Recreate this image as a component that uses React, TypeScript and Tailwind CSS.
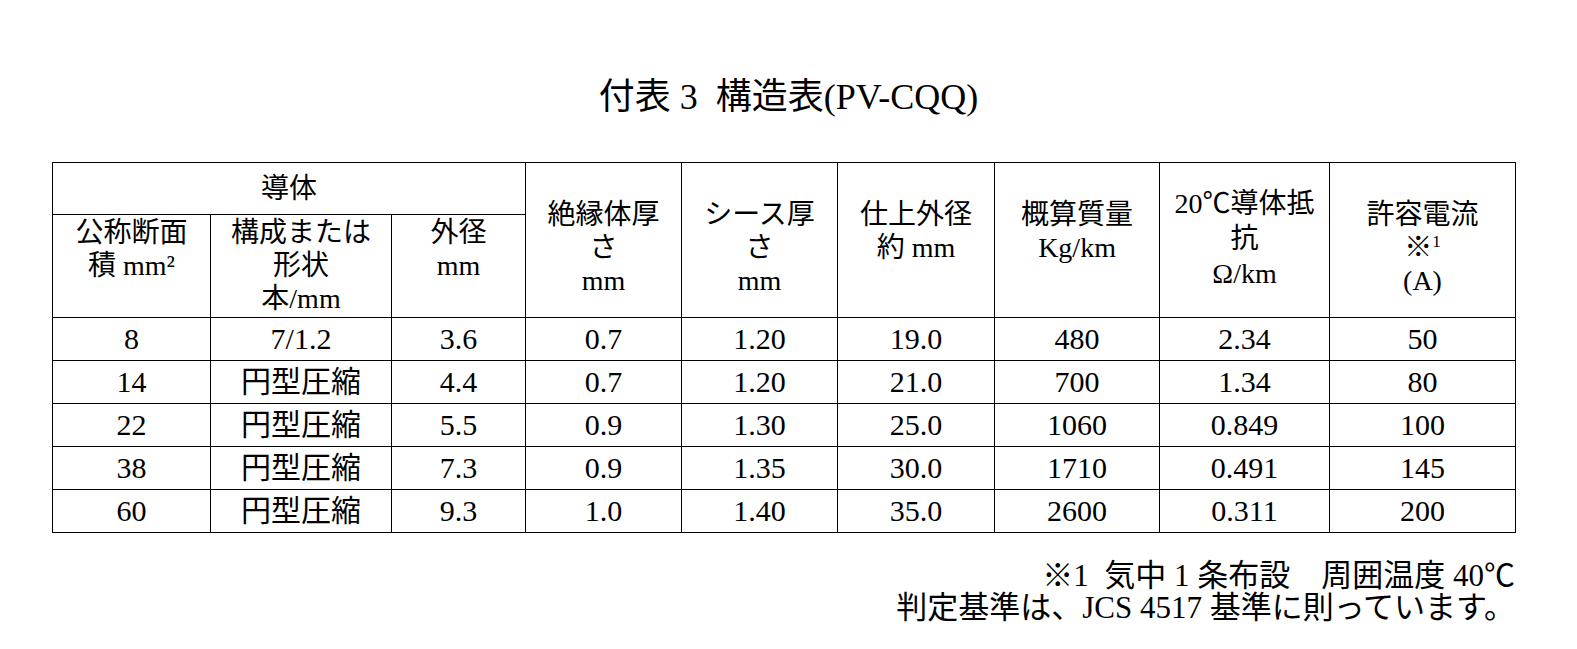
const rows = [
  ['8', '7/1.2', '3.6', '0.7', '1.20', '19.0', '480', '2.34', '50'],
  ['14', '円型圧縮', '4.4', '0.7', '1.20', '21.0', '700', '1.34', '80'],
  ['22', '円型圧縮', '5.5', '0.9', '1.30', '25.0', '1060', '0.849', '100'],
  ['38', '円型圧縮', '7.3', '0.9', '1.35', '30.0', '1710', '0.491', '145'],
  ['60', '円型圧縮', '9.3', '1.0', '1.40', '35.0', '2600', '0.311', '200'],
];

const colWidths = [158, 181, 134, 156, 156, 157, 165, 170, 186];

const cell = 'border border-black text-center p-0';
const tall = `${cell} align-top pt-[35px] leading-[33px]`;
const sub = `${cell} align-top pt-[1px] leading-[33px]`;

export default function App() {
  return (
    <div className="min-h-[649px] w-[1577px] bg-white text-black font-['Liberation_Serif','Noto_Sans_CJK_JP',serif]">
      <div className="pt-[77px] text-center text-[36px] leading-[40px]">
        付表 3&nbsp;&nbsp;構造表(PV-CQQ)
      </div>

      <div className="mt-[45px] pl-[52px]">
        <table className="w-[1464px] table-fixed border-collapse text-[28px]">
          <colgroup>
            {colWidths.map((w, i) => (
              <col key={i} style={{ width: w }} />
            ))}
          </colgroup>
          <thead>
            <tr>
              <th colSpan={3} className={`${cell} h-[52px] align-middle font-normal`}>導体</th>
              <th rowSpan={2} className={`${tall} font-normal`}>絶縁体厚<br />さ<br />mm</th>
              <th rowSpan={2} className={`${tall} font-normal`}>シース厚<br />さ<br />mm</th>
              <th rowSpan={2} className={`${tall} font-normal`}>仕上外径<br />約 mm</th>
              <th rowSpan={2} className={`${tall} font-normal`}>概算質量<br />Kg/km</th>
              <th rowSpan={2} className={`${cell} align-top pt-[23px] leading-[35px] font-normal`}>
                20℃導体抵<br />抗<br />Ω/km
              </th>
              <th rowSpan={2} className={`${tall} font-normal`}>
                許容電流<br />※<span className="inline-block align-top text-[17px] leading-[22px]">1</span><br />(A)
              </th>
            </tr>
            <tr>
              <th className={`${sub} h-[103px] font-normal`}>公称断面<br />積 mm²</th>
              <th className={`${sub} font-normal`}>構成または<br />形状<br />本/mm</th>
              <th className={`${sub} font-normal`}>外径<br />mm</th>
            </tr>
          </thead>
          <tbody className="text-[30px]">
            {rows.map((r, i) => (
              <tr key={i}>
                {r.map((v, j) => (
                  <td key={j} className={`${cell} h-[43px] align-middle leading-[32px]`}>{v}</td>
                ))}
              </tr>
            ))}
          </tbody>
        </table>
      </div>

      <div className="mt-[27px] pr-[62px] text-right text-[31px] leading-[32px]">
        <div>※1&nbsp;&nbsp;気中 1 条布設　周囲温度 40℃</div>
        <div>判定基準は、JCS 4517 基準に則っています。</div>
      </div>
    </div>
  );
}
